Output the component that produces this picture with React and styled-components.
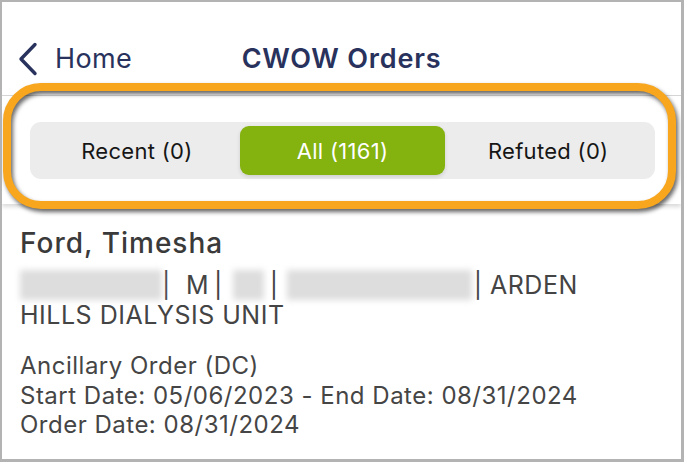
import React from "react";
import styled, { createGlobalStyle } from "styled-components";

const GlobalStyle = createGlobalStyle`
  html, body {
    margin: 0;
    padding: 0;
    background: #ffffff;
  }
  body {
    font-family: Inter, "Noto Sans", sans-serif;
  }
`;

const tabs = [
  { label: "Recent (0)" },
  { label: "All (1161)", active: true },
  { label: "Refuted (0)" },
];

export default function App() {
  return (
    <>
      <GlobalStyle />
      <Frame>
        <Header>
          <BackButton>
            <svg width="20" height="34" viewBox="0 0 20 34" fill="none">
              <polyline
                points="17,2.5 3,17 17,31.5"
                stroke="#28325c"
                strokeWidth="3.4"
                strokeLinecap="round"
                strokeLinejoin="round"
              />
            </svg>
            <span>Home</span>
          </BackButton>
          <Title>CWOW Orders</Title>
          <span />
        </Header>

        <TabSection>
          <Segmented>
            {tabs.map((t) => (
              <Segment key={t.label} $active={t.active}>
                {t.label}
              </Segment>
            ))}
          </Segmented>
          <Highlight />
        </TabSection>

        <OrderCard>
          <PatientName>Ford, Timesha</PatientName>
          <PatientInfo>
            <Blur $w={142} />|{"\u00a0\u00a0"}M{"\u2009"}|<Blur $w={31} $left={10} $gap={6} />|<Blur $w={185} $left={8} $gap={2} />| ARDEN HILLS DIALYSIS UNIT
          </PatientInfo>
          <OrderInfo>
            <div>Ancillary Order (DC)</div>
            <div>Start Date: 05/06/2023 - End Date: 08/31/2024</div>
            <div>Order Date: 08/31/2024</div>
          </OrderInfo>
        </OrderCard>
      </Frame>
    </>
  );
}

const Frame = styled.div`
  width: 684px;
  height: 462px;
  box-sizing: border-box;
  border: 2px solid #b3b3b3;
  border-right-width: 3px;
  border-bottom-width: 3px;
  background: #ffffff;
  overflow: hidden;
  display: flex;
  flex-direction: column;
`;

const Header = styled.div`
  height: 94px;
  box-sizing: border-box;
  padding-top: 20px;
  border-bottom: 1px solid #d6d6d6;
  display: grid;
  grid-template-columns: 1fr auto 1fr;
  align-items: center;
  color: #28325c;
`;

const BackButton = styled.div`
  display: flex;
  align-items: center;
  gap: 17px;
  padding-left: 16px;
  font-size: 27px;
  font-weight: 400;
  letter-spacing: 0.4px;
  span {
    line-height: 32px;
  }
`;

const Title = styled.div`
  font-size: 27px;
  font-weight: 600;
  line-height: 32px;
  letter-spacing: 0.8px;
`;

const TabSection = styled.div`
  position: relative;
  z-index: 2;
  padding: 26px 26px 25px 28px;
  background: #ffffff;
  box-shadow: 0 3px 4px rgba(0, 0, 0, 0.14);
`;

const Segmented = styled.div`
  display: grid;
  grid-template-columns: repeat(3, 1fr);
  padding: 4px;
  height: 57px;
  box-sizing: border-box;
  background: #ececec;
  border-radius: 11px;
`;

const Segment = styled.div`
  display: flex;
  align-items: center;
  justify-content: center;
  border-radius: 9px;
  font-size: 22px;
  font-weight: 400;
  letter-spacing: 0.3px;
  color: ${(p) => (p.$active ? "#ffffff" : "#161616")};
  background: ${(p) => (p.$active ? "#84b20e" : "transparent")};
  box-shadow: ${(p) => (p.$active ? "0 2px 4px rgba(0,0,0,0.12)" : "none")};
`;

const Highlight = styled.div`
  position: absolute;
  left: 1px;
  top: -13px;
  width: 673px;
  height: 126px;
  box-sizing: border-box;
  border: 8px solid #f7a61e;
  border-radius: 38px;
  filter: drop-shadow(2px 3px 2px rgba(0, 0, 0, 0.6));
  pointer-events: none;
`;

const OrderCard = styled.div`
  padding: 23px 20px 0 18px;
  color: #454545;
`;

const PatientName = styled.div`
  font-size: 28px;
  font-weight: 500;
  line-height: 32px;
  letter-spacing: 1px;
  color: #3a3a3a;
`;

const PatientInfo = styled.div`
  margin-top: 11px;
  max-width: 600px;
  font-size: 25px;
  line-height: 30px;
  letter-spacing: 0.5px;
  color: #444444;
`;

const Blur = styled.span`
  display: inline-block;
  vertical-align: -6px;
  width: ${(p) => p.$w}px;
  height: 30px;
  margin-left: ${(p) => p.$left || 0}px;
  margin-right: ${(p) => p.$gap || 0}px;
  background: #dddddd;
  filter: blur(3px);
`;

const OrderInfo = styled.div`
  margin-top: 21px;
  font-size: 24px;
  line-height: 29.5px;
  letter-spacing: 0.5px;
  color: #454545;
`;
